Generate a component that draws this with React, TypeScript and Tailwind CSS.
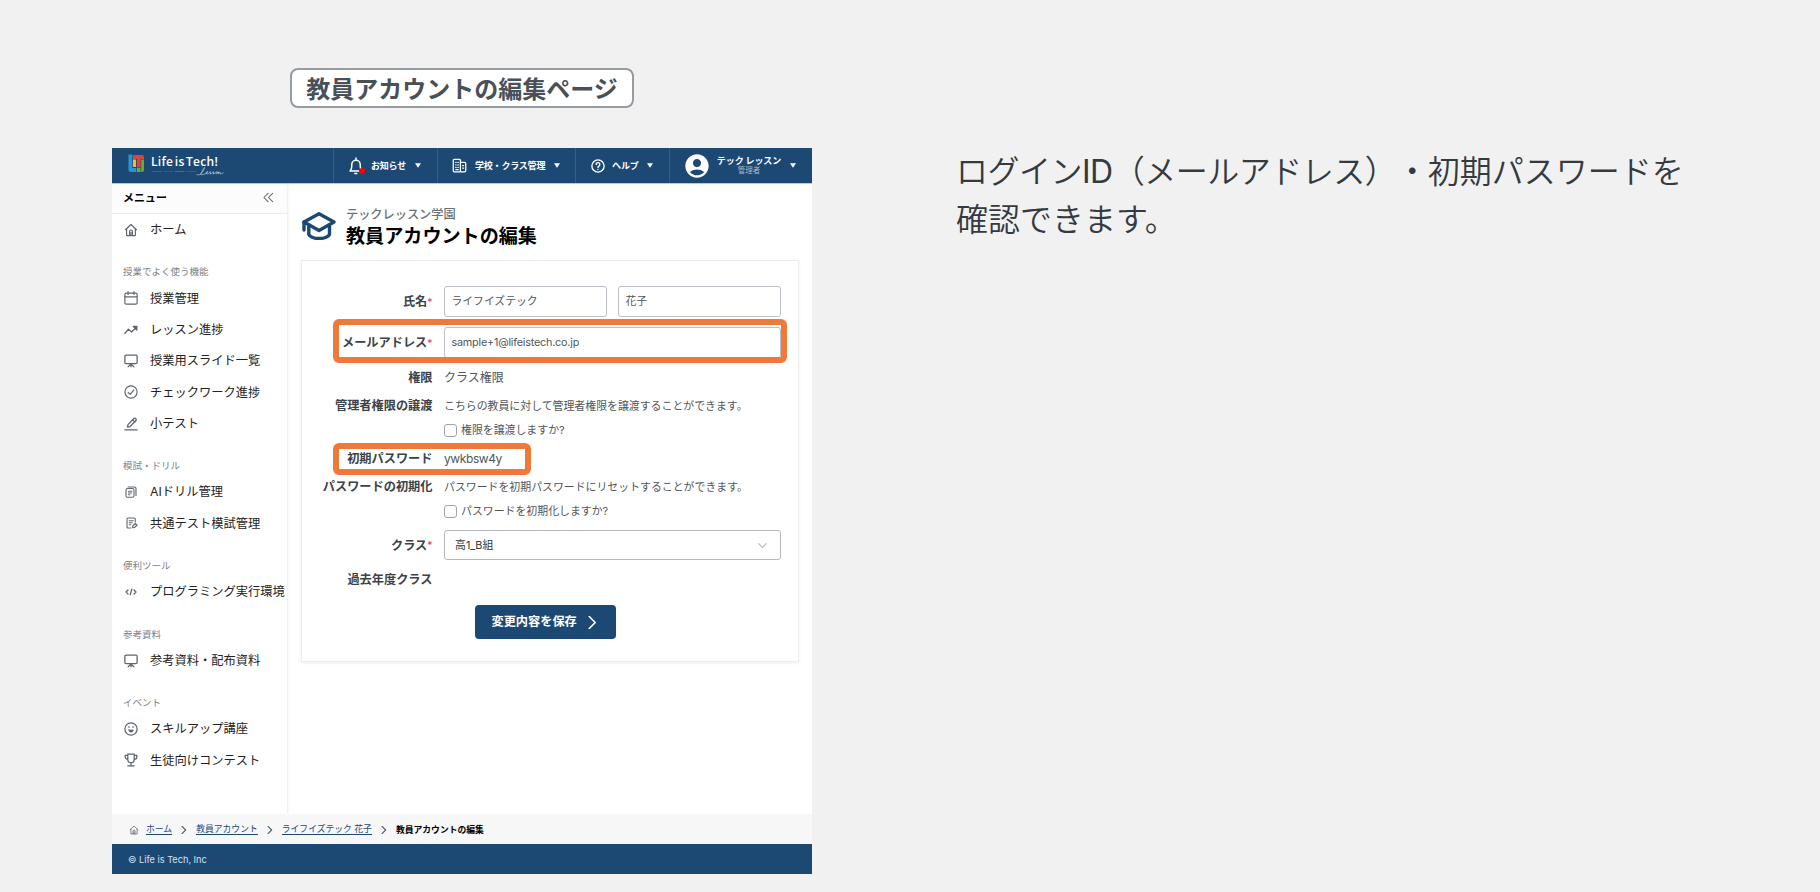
import type { ReactNode } from 'react';
import { MdAccountCircle } from 'react-icons/md';

const NAVY = '#1c4974';

type IconProps = { className?: string; children: ReactNode; strokeWidth?: number };

function Icon({ className = 'h-[14px] w-[14px]', children, strokeWidth = 2 }: IconProps) {
  return (
    <svg
      viewBox="0 0 24 24"
      className={`shrink-0 ${className}`}
      fill="none"
      stroke="currentColor"
      strokeWidth={strokeWidth}
      strokeLinecap="round"
      strokeLinejoin="round"
    >
      {children}
    </svg>
  );
}

const homePaths = (
  <>
    <path d="M2.5 11.5 12 2.5l9.5 9" />
    <path d="M4.5 10v11.5h15V10" />
    <path d="M9.5 21v-6.5a2.5 2.5 0 0 1 5 0V21M12 16v5" />
  </>
);

const boardPaths = (
  <>
    <rect x="1.5" y="2" width="21" height="14.5" rx="2" />
    <path d="M12 17v5M11 18l-4 4M13 18l4 4" />
  </>
);

const icons = {
  home: <Icon>{homePaths}</Icon>,
  calendar: (
    <Icon>
      <rect x="1.5" y="3.5" width="21" height="19" rx="2.5" />
      <path d="M1.5 10h21M7 1v5M17 1v5" />
    </Icon>
  ),
  trend: (
    <Icon strokeWidth={2.2}>
      <path d="m1.5 18 6-7.500 5.500 5L20 8.500" />
      <path d="M16 6h6v6z" fill="currentColor" />
    </Icon>
  ),
  board: <Icon strokeWidth={2.2}>{boardPaths}</Icon>,
  check: (
    <Icon>
      <circle cx="12" cy="12" r="10.5" />
      <path d="m7 12.5 3.5 3.5L17 8.5" />
    </Icon>
  ),
  pencil: (
    <Icon strokeWidth={2.2}>
      <path d="M6 17.5 6.8 13 17 2.5a1.8 1.8 0 0 1 2.6 0l.9.9a1.8 1.8 0 0 1 0 2.6L10.4 16.4z" />
      <path d="m15 5 3.5 3.5M1.5 22h21" />
    </Icon>
  ),
  copy: (
    <Icon className="mx-px h-[12px] w-[12px]" strokeWidth={2.2}>
      <path d="M6 2h13a3 3 0 0 1 3 3v14" />
      <rect x="2" y="5" width="16" height="17.500" rx="3" />
      <path d="M7 10.500h7M7 14h6M7 17.500h3" />
    </Icon>
  ),
  exam: (
    <Icon className="ml-[2px] h-[12px] w-[12px]" strokeWidth={2.2}>
      <path d="M18.500 10V4a2 2 0 0 0-2-2H4a2 2 0 0 0-2 2v16a2 2 0 0 0 2 2h5.500" />
      <path d="M6.500 7.500h8M6.500 11.500h6M6.500 15.500h3" />
      <path d="m13 21.500.5-3.500 5-5 3.500 3.500-5 4.500z" />
    </Icon>
  ),
  code: (
    <Icon className="mx-px h-[12px] w-[12px]" strokeWidth={2.600}>
      <path d="M6 8 2 12l4 4M18 8l4 4-4 4M13.500 6.500l-3 11" />
    </Icon>
  ),
  smile: (
    <Icon strokeWidth={2.2}>
      <circle cx="12" cy="12" r="10.500" />
      <path d="M8.500 8v1M15.500 8v1" />
      <path d="M8 13.500h8a4 4 0 0 1-8 0z" fill="currentColor" strokeWidth={1} />
    </Icon>
  ),
  trophy: (
    <Icon strokeWidth={2.2}>
      <path d="M6.500 2h11v9a5.500 5.500 0 0 1-11 0zM6.500 4H2v2.500a4.500 4.500 0 0 0 4.500 4.500M17.500 4H22v2.500a4.500 4.500 0 0 1-4.500 4.500M12 17v4.500M6.500 22h11" />
    </Icon>
  ),
};

type MenuGroup = { heading?: string; items: { icon: ReactNode; label: string }[] };

const menu: MenuGroup[] = [
  { items: [{ icon: icons.home, label: 'ホーム' }] },
  {
    heading: '授業でよく使う機能',
    items: [
      { icon: icons.calendar, label: '授業管理' },
      { icon: icons.trend, label: 'レッスン進捗' },
      { icon: icons.board, label: '授業用スライド一覧' },
      { icon: icons.check, label: 'チェックワーク進捗' },
      { icon: icons.pencil, label: '小テスト' },
    ],
  },
  {
    heading: '模試・ドリル',
    items: [
      { icon: icons.copy, label: 'AIドリル管理' },
      { icon: icons.exam, label: '共通テスト模試管理' },
    ],
  },
  { heading: '便利ツール', items: [{ icon: icons.code, label: 'プログラミング実行環境' }] },
  { heading: '参考資料', items: [{ icon: icons.board, label: '参考資料・配布資料' }] },
  {
    heading: 'イベント',
    items: [
      { icon: icons.smile, label: 'スキルアップ講座' },
      { icon: icons.trophy, label: '生徒向けコンテスト' },
    ],
  },
];

function Caret() {
  return (
    <svg viewBox="0 0 6 5" className="h-[5px] w-[6px] shrink-0" fill="currentColor">
      <path d="M0 .3h6L3 4.700z" />
    </svg>
  );
}

function Logo() {
  return (
    <div className="flex w-[221px] pl-4 pt-[6px]">
      <svg viewBox="0 0 17 19" className="h-[19px] w-[17px] shrink-0">
        <path d="M1 .5h3.300v13.500H8v4H3a2.500 2.500 0 0 1-2.500-2.500V1z" fill="#2a94d2" />
        <path d="M5 1h9a2 2 0 0 1 2 2v2H5z" fill="#e0433c" />
        <path d="M8.800 4h3.800v9.500H8.800z" fill="#e0433c" />
        <path d="M5 5.500h3v7.500H5z" fill="#f2bd27" />
        <path d="M13.200 5.500H16V16a2 2 0 0 1-2 2h-.8z" fill="#62ab3c" />
        <path d="M8.800 14h3.800v4H8.800z" fill="#62ab3c" />
      </svg>
      <svg viewBox="0 0 74 24" className="-mt-px ml-[6px] h-[24px] w-[74px]">
        <text x="0" y="12.500" fontSize="12" fontWeight="600" letterSpacing=".2" wordSpacing="-2" textLength="67" fill="#fff" fontFamily="'Open Sans', sans-serif">
          Life is Tech!
        </text>
        <path d="M1 18.500h9.500" stroke="#2c6fa3" strokeWidth=".8" />
        <path d="M12.500 18.500H22" stroke="#6d4a6d" strokeWidth=".8" />
        <path d="M24 18.500h9.500" stroke="#5f7660" strokeWidth=".8" />
        <path d="M35.500 18.500H45" stroke="#337064" strokeWidth=".8" />
        <path
          d="M45.500 21.500c3.500 1.500 5-1.500 6-4s1.500-3.500 2-3-1.500 4-3.500 6 2 .8 4 .5 3.200-2 2.500-2.500-2 1.500-.8 2.200 2.800-1 3.600-2.200c-.2 1 1 1.800-.5 2.300 2 0 3-1.300 3.500-2.300 0 1 1 1.800-.4 2.300 1.800 0 2.900-1.300 3.700-2-.9.800-.9 2 0 2s1.600-1.800.7-2 0 1 1.300.4c.6-.2-.2.900-.5 1.800.8-1.300 1.500-2 2-1.800s-.5 1.700 0 1.800 1.500-.6 3.500-1.200"
          fill="none"
          stroke="#d5dde6"
          strokeWidth=".6"
        />
      </svg>
    </div>
  );
}

function Header() {
  return (
    <header className="flex h-9 shrink-0 border-b border-[#b9c9dc] bg-[#1c4974] text-[9px] font-bold text-white">
      <Logo />
      <div className="flex w-[104px] items-center border-l border-[#355d85] pl-[15px]">
        <div className="relative">
          <svg viewBox="0 0 14 18" className="h-[18px] w-[14px]" fill="none" stroke="currentColor" strokeWidth="1.500" strokeLinecap="round" strokeLinejoin="round">
            <path d="M1 14c1.700-1.500 1.800-3.500 1.800-6.500a4.200 4.200 0 0 1 8.400 0c0 3 .1 5 1.800 6.500zM7 1v2M5.800 16.500h2" />
          </svg>
          <span className="absolute bottom-px right-[-2px] h-[6px] w-[6px] rounded-full bg-[#ff0000]" />
        </div>
        <span className="ml-[8px] w-[36px] whitespace-nowrap tracking-[-0.2px]">お知らせ</span>
        <span className="ml-2"><Caret /></span>
      </div>
      <div className="flex w-[138px] items-center border-l border-[#355d85] pl-[14px]">
        <Icon className="h-[15px] w-[15px]" strokeWidth={2}>
          <rect x="2" y="2" width="11.500" height="20" rx="1.500" />
          <path d="M13.500 7H20a2 2 0 0 1 2 2v11a2 2 0 0 1-2 2h-6.500M6 7h.5M9.500 7h.5M6 11h.5M9.500 11h.5M6 15h.5M9.500 15h.5M6 18.500h4M17 12h1.500M17 16h1.500" />
        </Icon>
        <span className="ml-[8px] w-[72px] whitespace-nowrap tracking-[-0.2px]">学校・クラス管理</span>
        <span className="ml-[7px]"><Caret /></span>
      </div>
      <div className="flex w-[94px] items-center border-l border-[#355d85] pl-[15px]">
        <Icon className="h-[14px] w-[14px]" strokeWidth={2.300}>
          <circle cx="12" cy="12" r="10.500" />
          <path d="M8.800 9.500a3.200 3.200 0 1 1 4.800 2.700c-1.100.7-1.600 1.200-1.600 2.300M12 17.800v.2" />
        </Icon>
        <span className="ml-[7px] w-[27px] whitespace-nowrap tracking-[-0.1px]">ヘルプ</span>
        <span className="ml-[8px]"><Caret /></span>
      </div>
      <div className="flex flex-1 items-center border-l border-[#355d85] pl-[13px]">
        <MdAccountCircle className="h-[28px] w-[28px] shrink-0" />
        <div className="ml-[5px] flex w-[66px] flex-col items-center leading-[10px]">
          <span className="whitespace-nowrap tracking-[-0.1px]">テック レッスン</span>
          <span className="text-[7.500px] font-normal text-[#a9bacb]">管理者</span>
        </div>
        <span className="ml-[8px]"><Caret /></span>
      </div>
    </header>
  );
}

function Sidebar() {
  return (
    <aside className="w-[176px] shrink-0 border-r border-[#f1f1f1] shadow-[1px_0_2px_rgba(0,0,0,0.04)]">
      <div className="flex h-[30px] items-center justify-between border-b border-[#ececec] bg-[#fcfcfc] pl-[11px] pr-[13px]">
        <span className="text-[11px] font-bold text-black">メニュー</span>
        <Icon className="mb-[3px] h-[11px] w-[11px] text-[#5f666d]" strokeWidth={2.300}>
          <path d="m11 3-9 9 9 9M21 3l-9 9 9 9" />
        </Icon>
      </div>
      {menu.map((group, i) => (
        <div key={i}>
          {group.heading && (
            <div className="h-[37.200px] pl-[11px] pt-[16px]">
              <span className="block text-[9.500px] leading-[21px] text-[#7b8188]">{group.heading}</span>
            </div>
          )}
          {group.items.map((item) => (
            <div key={item.label} className="flex h-[31.350px] items-center pl-3 text-[#5f666d]">
              <span className="flex w-[14px]">{item.icon}</span>
              <span className="ml-3 whitespace-nowrap pt-px text-[12.250px] text-[#222]">{item.label}</span>
            </div>
          ))}
        </div>
      ))}
    </aside>
  );
}

type RowProps = { label: string; required?: boolean; className: string; highlight?: string; children?: ReactNode };

function Row({ label, required, className, highlight, children }: RowProps) {
  return (
    <div className={`relative flex items-center ${className}`}>
      <div className="mr-[11.500px] flex w-[130.500px] shrink-0 items-center justify-end whitespace-nowrap pt-[1.500px] text-[12.200px] font-bold text-[#3c4248]">
        {label}
        {required && <span className="text-[10px] font-medium text-[#e8404a]">*</span>}
      </div>
      {children}
      {highlight && <div className={`absolute border-[6px] border-[#f07838] ${highlight}`} />}
    </div>
  );
}

function TextBox({ value, className }: { value: string; className: string }) {
  return (
    <div className={`flex h-[31px] items-center rounded-[3px] border border-[#b9bfc5] pl-[6.500px] pt-[2px] text-[10.800px] ${className}`}>
      {value}
    </div>
  );
}

function CheckLine({ label }: { label: string }) {
  return (
    <div className="ml-[142px] flex h-[24px] items-center text-[10.900px]">
      <span className="mr-[4px] h-[13px] w-[13px] shrink-0 rounded-[3px] border border-[#9da4ab] bg-white" />
      {label}
    </div>
  );
}

function EditForm() {
  return (
    <div className="ml-[13px] mt-[10px] h-[402px] w-[498px] border border-[#ececec] pt-[25px] text-[#50565c] shadow-[0_1px_3px_rgba(0,0,0,0.08)]">
      <Row label="氏名" required className="h-[31px]">
        <TextBox value="ライフイズテック" className="w-[163px]" />
        <TextBox value="花子" className="ml-[11px] w-[163px]" />
      </Row>
      <Row
        label="メールアドレス"
        required
        className="mt-[10px] h-[31px]"
        highlight="-top-[8px] left-[31px] h-[44px] w-[454px] rounded-[6px]"
      >
        <TextBox value="sample+1@lifeistech.co.jp" className="w-[337px] tracking-[-0.200px]" />
      </Row>
      <Row label="権限" className="mt-[5px] h-[28px]">
        <span className="pt-[1.500px] text-[12px]">クラス権限</span>
      </Row>
      <Row label="管理者権限の譲渡" className="mt-px h-[26px]">
        <span className="pt-[1.500px] text-[10.900px]">こちらの教員に対して管理者権限を譲渡することができます。</span>
      </Row>
      <CheckLine label="権限を譲渡しますか?" />
      <Row label="初期パスワード" className="mt-px h-[30px]" highlight="top-0 left-[31px] h-[32px] w-[198px] rounded-[6px]">
        <span className="pt-[1.500px] text-[12px] tracking-[-0.400px]">ywkbsw4y</span>
      </Row>
      <Row label="パスワードの初期化" className="h-[26px]">
        <span className="pt-[1.500px] text-[10.900px]">パスワードを初期パスワードにリセットすることができます。</span>
      </Row>
      <CheckLine label="パスワードを初期化しますか?" />
      <Row label="クラス" required className="mt-[7px] h-[30px]">
        <div className="flex h-[30px] w-[337px] items-center justify-between rounded-[3px] border border-[#b3b8bd] pl-[10px] pr-[13px] text-[10.900px] text-[#33383d]">
          <span className="pt-px">高1_B組</span>
          <Icon className="h-[9px] w-[9px] text-[#b4b9bd]" strokeWidth={3}>
            <path d="m2 7 10 10L22 7" />
          </Icon>
        </div>
      </Row>
      <Row label="過去年度クラス" className="mt-[5px] h-[28px]" />
      <button className="ml-[173px] mt-[12px] flex h-[34px] w-[141px] items-center rounded-[4px] bg-[#1c4974] pl-[16.500px] text-[12.200px] font-bold text-white">
        <span className="pt-px">変更内容を保存</span>
        <Icon className="ml-[9px] h-[13px] w-[13px]" strokeWidth={3}>
          <path d="m6 1 11 11L6 23" />
        </Icon>
      </button>
    </div>
  );
}

function Main() {
  return (
    <main className="flex-1">
      <div className="mt-[20px] flex h-[46px] pl-[14px]">
        <svg viewBox="0 0 34 28" className="mt-[8px] h-[28px] w-[34px] shrink-0" fill="none" stroke={NAVY} strokeWidth="3.400" strokeLinecap="round" strokeLinejoin="round">
          <path d="m17 1.800 15 8.200-15 8.500L2 10z" />
          <path d="M2 10v8M6.800 14v8.500c1.500 2.700 5.500 4 10.200 4s9-1.300 10.500-4V14" />
        </svg>
        <div className="ml-[10px]">
          <div className="pt-px text-[12.200px] font-medium leading-[19px] text-[#6a7178]">テックレッスン学園</div>
          <h1 className="text-[19.100px] font-bold leading-[24px] text-black">教員アカウントの編集</h1>
        </div>
      </div>
      <EditForm />
    </main>
  );
}

function Separator() {
  return (
    <Icon className="h-[8px] w-[8px] text-[#555c63]" strokeWidth={3.200}>
      <path d="m6 1 11 11L6 23" />
    </Icon>
  );
}

function Breadcrumbs() {
  return (
    <nav className="flex h-[30px] shrink-0 items-center bg-[#f7f7f7] pl-[17px] pt-px text-[8.800px] text-[#1c4974]">
      <Icon className="h-[10px] w-[10px] text-[#6a7077]">{homePaths}</Icon>
      <a className="ml-[7px] mr-2 border-b border-[#1c4974] leading-[10px]">ホーム</a>
      <Separator />
      <a className="mx-2 border-b border-[#1c4974] leading-[10px]">教員アカウント</a>
      <Separator />
      <a className="mx-2 border-b border-[#1c4974] leading-[10px]">ライフイズテック 花子</a>
      <Separator />
      <span className="ml-2 font-bold text-black">教員アカウントの編集</span>
    </nav>
  );
}

export default function App() {
  return (
    <div className="flex h-[892px] w-[1820px] overflow-hidden bg-[#f1f1f1] font-['Inter','Noto_Sans_CJK_JP',sans-serif]">
      <section className="ml-[112px] flex w-[700px] flex-col items-center pt-[68px]">
        <div className="flex h-[40px] w-[344px] items-center justify-center rounded-[8px] border-2 border-[#959ca2] bg-white pt-[3px] text-[24px] font-bold text-[#495057]">
          教員アカウントの編集ページ
        </div>
        <div className="mt-[40px] flex h-[726px] w-full flex-col bg-white">
          <Header />
          <div className="flex min-h-0 flex-1">
            <Sidebar />
            <Main />
          </div>
          <Breadcrumbs />
          <footer className="flex h-[30px] shrink-0 items-center bg-[#1c4974] pl-4 pt-px text-[9.200px] text-[#d8e0e8]">
            © Life is Tech, Inc
          </footer>
        </div>
      </section>
      <p className="ml-[144px] mt-[148px] whitespace-nowrap text-[32px] font-[350] leading-[48px] text-[#343a40] [text-spacing-trim:space-all]">
        <span className="tracking-[-0.500px]">
          ログイン<span className="font-normal">ID</span>（メールアドレス）・
        </span>
        初期パスワードを
        <br />
        確認できます。
      </p>
    </div>
  );
}
